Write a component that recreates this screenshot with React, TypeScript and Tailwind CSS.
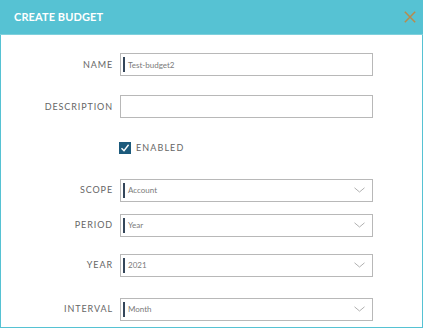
import React from "react";

const Chevron = () => (
  <svg width="11" height="6" viewBox="0 0 11 6" className="absolute right-[7px] top-1/2 -translate-y-1/2">
    <path d="M0.5 0.8 L5.5 5 L10.5 0.8" fill="none" stroke="#b0b0b0" strokeWidth="1" />
  </svg>
);

const Field = ({ label, value, select, mt }: { label: string; value?: string; select?: boolean; mt: string }) => (
  <div className={`flex items-center ${mt}`}>
    <div className="w-[112px] text-right text-[9px] tracking-[0.9px] text-[#666]">{label}</div>
    <div className="relative ml-[7px] h-[23px] w-[253px] border border-[#b8b8b8] bg-white">
      {value !== undefined && (
        <>
          <div className="absolute left-[2px] top-[3px] bottom-[3px] w-[2px] bg-[#34465a]" />
          <div className="absolute left-[7px] top-1/2 -translate-y-1/2 text-[8px] text-[#7a7a7a]">{value}</div>
        </>
      )}
      {select && <Chevron />}
    </div>
  </div>
);

export default function App() {
  return (
    <div className="w-[424px] h-[329px] bg-white" style={{ fontFamily: "Lato, 'Open Sans', sans-serif" }}>
      <div className="w-[423px] h-[328px] border-x border-b border-[#56c2d3] flex flex-col">
        <div className="h-[35px] bg-[#56c2d3] -mx-px flex items-center justify-between pl-[14px] pr-[7px] border-b border-[#7fd0dc]">
          <div className="text-white font-bold text-[11px] tracking-[0.1px]">CREATE BUDGET</div>
          <svg width="12" height="12" viewBox="0 0 12 12">
            <path d="M0.8 0.8 L11.2 11.2 M11.2 0.8 L0.8 11.2" stroke="#b98a4c" strokeWidth="1.5" />
          </svg>
        </div>
        <div className="flex flex-col pt-[18px]">
          <Field label="NAME" value="Test-budget2" mt="mt-0" />
          <Field label="DESCRIPTION" mt="mt-[19px]" />
          <div className="flex items-center mt-[23px] ml-[118px]">
            <div className="w-[12px] h-[12px] bg-[#1c5a7c] flex items-center justify-center">
              <svg width="10" height="10" viewBox="0 0 10 10">
                <path d="M1.5 5.2 L4 7.8 L8.6 1.8" fill="none" stroke="white" strokeWidth="1.4" />
              </svg>
            </div>
            <div className="ml-[5px] text-[9px] tracking-[1.1px] text-[#666]">ENABLED</div>
          </div>
          <Field label="SCOPE" value="Account" select mt="mt-[24px]" />
          <Field label="PERIOD" value="Year" select mt="mt-[12px]" />
          <Field label="YEAR" value="2021" select mt="mt-[17px]" />
          <Field label="INTERVAL" value="Month" select mt="mt-[21px]" />
        </div>
      </div>
    </div>
  );
}
